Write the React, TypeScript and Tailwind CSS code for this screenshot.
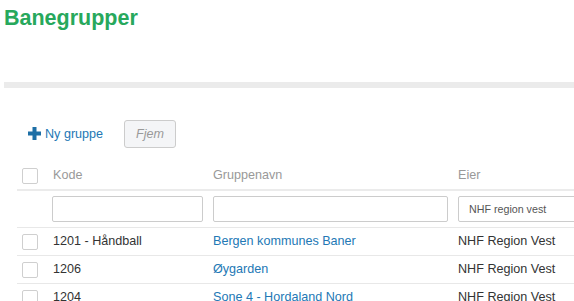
type Group = {
  code: string;
  name: string;
  owner: string;
};

const groups: Group[] = [
  { code: "1201 - Håndball", name: "Bergen kommunes Baner", owner: "NHF Region Vest" },
  { code: "1206", name: "Øygarden", owner: "NHF Region Vest" },
  { code: "1204", name: "Sone 4 - Hordaland Nord", owner: "NHF Region Vest" },
];

const Checkbox = () => (
  <div className="h-4 w-4 rounded-[2px] border border-[#cfcfcf] bg-white" />
);

const PlusIcon = () => (
  <svg width="13" height="13" viewBox="0 0 13 13" className="text-[#1d6fa6]">
    <rect x="4.5" y="0" width="4" height="13" fill="currentColor" />
    <rect x="0" y="4.5" width="13" height="4" fill="currentColor" />
  </svg>
);

const App = () => {
  return (
    <div className="h-[301px] w-[574px] overflow-hidden bg-white font-['Liberation_Sans',Arial,sans-serif] text-[12.6px] text-[#333]">
      <h1 className="ml-[4px] mt-[6px] text-[21.5px] font-bold leading-[24px] text-[#27a85c]">
        Banegrupper
      </h1>

      <div className="ml-[4px] mt-[52px] h-[6px] bg-[#ebebeb]" />

      <div className="pl-[17px]">
        {/* toolbar */}
        <div className="mt-[32px] flex h-[28px] items-center pl-[11px]">
          <button className="flex items-center gap-[4px] text-[#2378b5]">
            <PlusIcon />
            <span>Ny gruppe</span>
          </button>
          <button className="ml-[21px] h-[28px] w-[52px] rounded-[3px] border border-[#cccccc] bg-[#f4f5f7] italic text-[#999]">
            Fjem
          </button>
        </div>

        {/* table */}
        <div className="mt-[11px] w-[640px]">
          <div className="grid h-[32px] grid-cols-[30px_161px_245px_1fr] items-center border-b-2 border-[#ebebeb] pt-[3px] text-[#999]">
            <div className="px-[5px]">
              <Checkbox />
            </div>
            <div className="px-[6px]">Kode</div>
            <div className="px-[5px]">Gruppenavn</div>
            <div className="px-[5px]">Eier</div>
          </div>

          <div className="grid grid-cols-[30px_161px_245px_1fr] border-b border-[#e8e8e8] py-[5px]">
            <div />
            <div className="px-[5px]">
              <input className="h-[26px] w-full rounded-[2px] border border-[#cccccc] bg-white px-2 outline-none" />
            </div>
            <div className="px-[5px]">
              <input className="h-[26px] w-full rounded-[2px] border border-[#cccccc] bg-white px-2 outline-none" />
            </div>
            <div className="px-[5px]">
              <div className="flex h-[26px] w-full items-center rounded-[2px] border border-[#cccccc] bg-white pl-[10px] text-[10.7px] text-[#555]">
                NHF region vest
              </div>
            </div>
          </div>

          {groups.map((g) => (
            <div
              key={g.code}
              className="grid h-[28px] grid-cols-[30px_161px_245px_1fr] items-center border-b border-[#e8e8e8]"
            >
              <div className="px-[5px]">
                <Checkbox />
              </div>
              <div className="px-[6px]">{g.code}</div>
              <div className="px-[5px]">
                <a className="text-[#2378b5]">{g.name}</a>
              </div>
              <div className="px-[5px]">{g.owner}</div>
            </div>
          ))}
        </div>
      </div>
    </div>
  );
};

export default App;
